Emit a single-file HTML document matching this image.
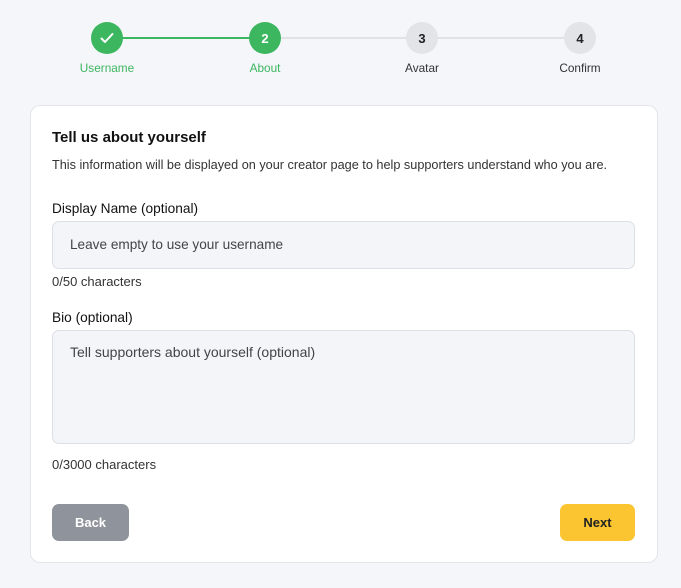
<!DOCTYPE html>
<html><head><style>
*{box-sizing:border-box;margin:0;padding:0}
body{width:681px;height:588px;background:#f5f6fa;font-family:"Liberation Sans",sans-serif;position:relative;overflow:hidden;color:#111}
.abs{position:absolute;white-space:nowrap}
.c{position:absolute;width:32px;height:32px;border-radius:50%;top:22px;display:flex;align-items:center;justify-content:center;font-size:13px;font-weight:bold}
.lbl{position:absolute;top:61px;font-size:11.8px;width:100px;text-align:center}
.card{position:absolute;left:30px;top:105px;width:628px;height:458px;background:#fff;border:1px solid #e3e5ea;border-radius:10px}
.inp{position:absolute;left:52px;width:583px;background:#f4f5f9;border:1.5px solid #dcdfe5;border-radius:7px;font-size:13.6px;color:#444;padding-left:17px;white-space:nowrap}
</style></head><body>
<div class="abs" style="left:107px;top:37px;width:158px;height:2px;background:#3db660"></div>
<div class="abs" style="left:265px;top:37px;width:315px;height:1.5px;background:#e0e2e7"></div>
<div class="c" style="left:91px;background:#3db660"><svg width="18" height="18" viewBox="0 0 18 18"><path d="M3.5 9.5l3.5 3.5 7.5-8" fill="none" stroke="#fff" stroke-width="2" stroke-linecap="round" stroke-linejoin="round"/></svg></div>
<div class="c" style="left:249px;background:#3db660;color:#fff">2</div>
<div class="c" style="left:406px;background:#e3e4e8;color:#222">3</div>
<div class="c" style="left:564px;background:#e3e4e8;color:#222">4</div>
<div class="lbl" style="left:57px;color:#3db660">Username</div>
<div class="lbl" style="left:215px;color:#3db660">About</div>
<div class="lbl" style="left:372px;color:#333">Avatar</div>
<div class="lbl" style="left:530px;color:#333">Confirm</div>
<div class="card"></div>
<div class="abs" style="left:52px;top:129px;font-size:15px;font-weight:bold">Tell us about yourself</div>
<div class="abs" style="left:52px;top:158px;font-size:12.7px;color:#333">This information will be displayed on your creator page to help supporters understand who you are.</div>
<div class="abs" style="left:52px;top:201px;font-size:13.7px">Display Name (optional)</div>
<div class="inp" style="top:221px;height:48px;line-height:45px">Leave empty to use your username</div>
<div class="abs" style="left:52px;top:274px;font-size:13px;color:#333">0/50 characters</div>
<div class="abs" style="left:52px;top:310px;font-size:13.7px">Bio (optional)</div>
<div class="inp" style="top:330px;height:114px;padding-top:13px;font-size:14px">Tell supporters about yourself (optional)</div>
<div class="abs" style="left:52px;top:457px;font-size:13px;color:#333">0/3000 characters</div>
<div class="abs" style="left:52px;top:504px;width:77px;height:37px;background:#8f939b;border-radius:7px;color:#fff;font-weight:bold;font-size:13px;text-align:center;line-height:37px">Back</div>
<div class="abs" style="left:560px;top:504px;width:75px;height:37px;background:#fbc531;border-radius:7px;color:#222;font-weight:bold;font-size:13px;text-align:center;line-height:37px">Next</div>
</body></html>
